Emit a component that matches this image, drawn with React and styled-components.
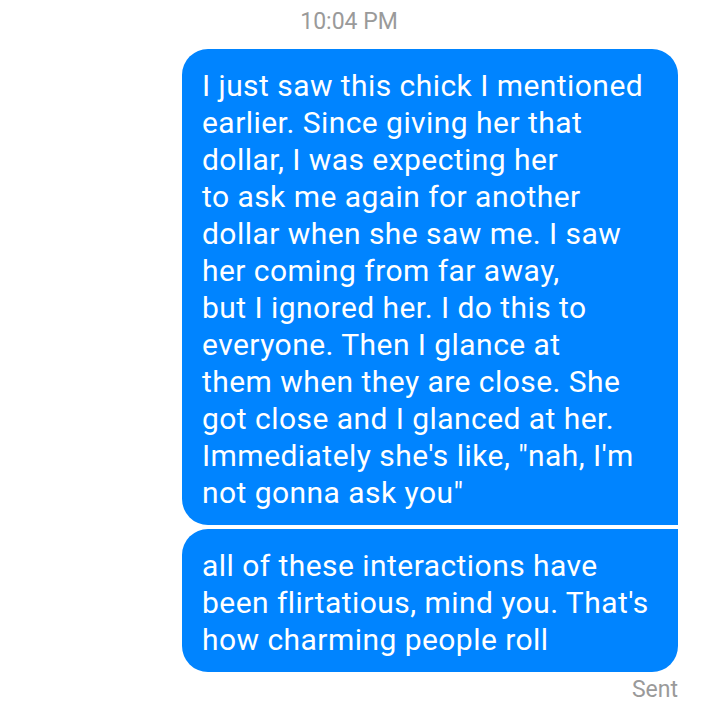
import styled, { createGlobalStyle } from 'styled-components'

const GlobalStyle = createGlobalStyle`
  body {
    margin: 0;
    background: #ffffff;
    font-family: Roboto, "Noto Sans", sans-serif;
  }
`;

const Thread = styled.div`
  width: 720px;
  height: 720px;
  box-sizing: border-box;
  padding: 8px 42px 0 0;
  display: flex;
  flex-direction: column;
  align-items: flex-end;
`;

const Stamp = styled.div`
  align-self: stretch;
  text-align: center;
  padding-left: 20px;
  font-size: 23px;
  color: #9a9a9a;
  margin-bottom: 14px;
`;

const Group = styled.div`
  display: flex;
  flex-direction: column;
  align-items: flex-end;
  gap: 4px;
`;

const Bubble = styled.div`
  width: 496px;
  box-sizing: border-box;
  padding: 18px 20px 14px;
  background: #0084ff;
  color: #ffffff;
  font-size: 30px;
  letter-spacing: 0.45px;
  line-height: 37px;
  border-radius: ${p => p.first ? '26px 26px 0 26px' : '26px 0 26px 26px'};
`;

const Line = styled.div`
  white-space: nowrap;
`;

const Status = styled.div`
  margin-top: 4px;
  font-size: 23px;
  color: #9a9a9a;
`;

const messages = [
  [
    'I just saw this chick I mentioned',
    'earlier. Since giving her that',
    'dollar, I was expecting her',
    'to ask me again for another',
    'dollar when she saw me. I saw',
    'her coming from far away,',
    'but I ignored her. I do this to',
    'everyone. Then I glance at',
    'them when they are close. She',
    'got close and I glanced at her.',
    'Immediately she\'s like, "nah, I\'m',
    'not gonna ask you"',
  ],
  [
    'all of these interactions have',
    'been flirtatious, mind you. That\'s',
    'how charming people roll',
  ],
];

export default function App() {
  return (
    <>
      <GlobalStyle />
      <Thread>
        <Stamp>10:04 PM</Stamp>
        <Group>
          {messages.map((lines, i) => (
            <Bubble key={i} first={i === 0}>
              {lines.map((l, j) => <Line key={j}>{l}</Line>)}
            </Bubble>
          ))}
        </Group>
        <Status>Sent</Status>
      </Thread>
    </>
  )
}
